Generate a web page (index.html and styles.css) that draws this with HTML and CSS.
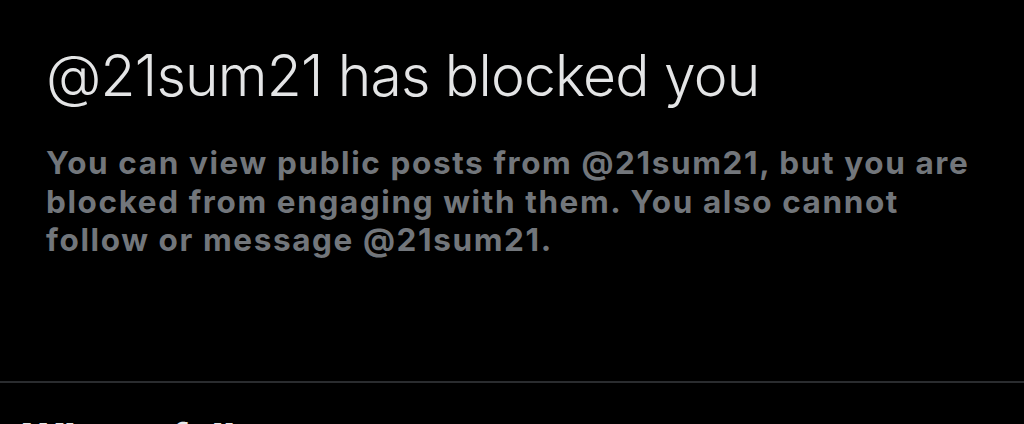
FILE: index.html
```html
<!DOCTYPE html>
<html lang="en">
<head>
<meta charset="utf-8">
<title>Blocked</title>
<link rel="stylesheet" href="styles.css">
</head>
<body>
<main class="page">
  <section class="blocked">
    <h1 class="blocked-title">@21sum21 has blocked you</h1>
    <p class="blocked-text">You can view public posts from @21sum21, but you are blocked from engaging with them. You also cannot follow or message @21sum21.</p>
  </section>
  <section class="follow">
    <h2 class="follow-title">Who to follow</h2>
  </section>
</main>
</body>
</html>
```
FILE: styles.css
```css
html, body {
  margin: 0;
  padding: 0;
  background: #000;
  height: 100%;
  overflow: hidden;
}
.page {
  display: flex;
  flex-direction: column;
}
.blocked {
  padding: 38px 38px 0 46px;
  height: 383px;
  box-sizing: border-box;
  border-bottom: 2px solid #2a2c2f;
}
.blocked-title {
  margin: 0;
  font-family: Inter, "Liberation Sans", sans-serif;
  font-weight: 300;
  font-size: 57px;
  line-height: 76px;
  color: #e4e5e6;
  letter-spacing: -0.8px;
}
.blocked-text {
  margin: 30px 0 0;
  font-family: Inter, "Liberation Sans", sans-serif;
  font-weight: 700;
  font-size: 31.5px;
  line-height: 38.5px;
  color: #72767b;
  letter-spacing: 1.6px;
}
.follow {
  padding: 31px 22px 0;
}
.follow-title {
  margin: 0;
  font-family: Inter, "Liberation Sans", sans-serif;
  font-weight: 800;
  font-size: 40px;
  line-height: 48px;
  color: #e7e9ea;
}
```
